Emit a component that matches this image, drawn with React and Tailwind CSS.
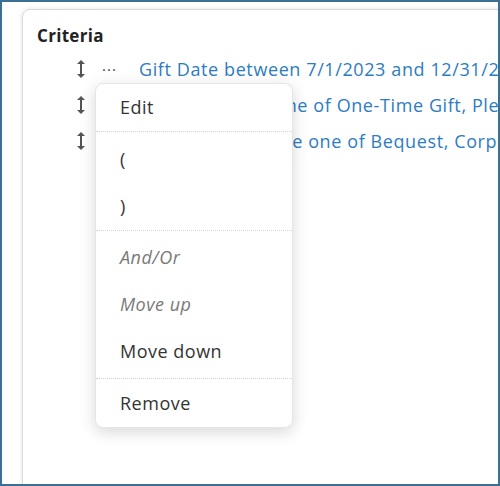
import React from 'react';

const font = { fontFamily: '"Open Sans", "Liberation Sans", sans-serif' };

const UpDownIcon = () => (
  <svg width="10" height="22" viewBox="0 0 10 22" className="text-[#555]" aria-hidden="true">
    <path d="M5 3v16" stroke="currentColor" strokeWidth="2" />
    <path d="M1 6l4-4 4 4z M1 16l4 4 4-4z" fill="currentColor" />
  </svg>
);

const criteria = [
  'Gift Date between 7/1/2023 and 12/31/2023',
  'Receipt type is one of One-Time Gift, Pledge',
  'Gift types must be one of Bequest, Corporate',
];

const Row = ({ text, first }) => (
  <div className="flex items-center h-[36px]">
    <div className="w-[36px] shrink-0 flex justify-center"><UpDownIcon /></div>
    <div className="w-[40px] shrink-0 pl-[3px] text-[#444] text-[15px] leading-none tracking-[1px]">{first ? '···' : ''}</div>
    <a className="text-[18px] tracking-[0.6px] text-[#2d7cc1] whitespace-nowrap">{text}</a>
  </div>
);

const MenuItem = ({ children, disabled }) => (
  <div className={`h-[47px] flex items-center pl-[24px] text-[18px] tracking-[0.5px] ${disabled ? 'italic text-[#7a7a7a]' : 'text-[#333]'}`}>
    {children}
  </div>
);

const Sep = () => <div className="border-t border-dotted border-[#d2d2d2]" />;

export default function App() {
  return (
    <div className="w-[500px] h-[486px] border-2 border-[#3b6f93] bg-white overflow-hidden relative" style={font}>
      <div className="ml-[20px] mt-[7px] w-[520px] h-[520px] border border-[#dadada] rounded-lg shadow-[0_0_4px_rgba(0,0,0,0.12)] pl-[14px] pt-[14px]">
        <div className="text-[17px] font-bold tracking-[0.3px] text-[#222] leading-[24px]">Criteria</div>
        <div className="mt-[3px] pl-[26px]">
          {criteria.map((c, i) => (
            <Row key={i} text={c} first={i === 0} />
          ))}
        </div>
      </div>

      <div className="absolute left-[93px] top-[81px] w-[198px] bg-white rounded-lg border border-[#e6e6e6] shadow-[0_4px_16px_rgba(0,0,0,0.16)]">
        <MenuItem>Edit</MenuItem>
        <Sep />
        <div className="pt-[4px]">
          <MenuItem>(</MenuItem>
          <MenuItem>)</MenuItem>
        </div>
        <Sep />
        <div className="pt-[3px] pb-[3px]">
          <MenuItem disabled>And/Or</MenuItem>
          <MenuItem disabled>Move up</MenuItem>
          <MenuItem>Move down</MenuItem>
        </div>
        <Sep />
        <div className="pt-[1px]">
          <MenuItem>Remove</MenuItem>
        </div>
      </div>
    </div>
  );
}
